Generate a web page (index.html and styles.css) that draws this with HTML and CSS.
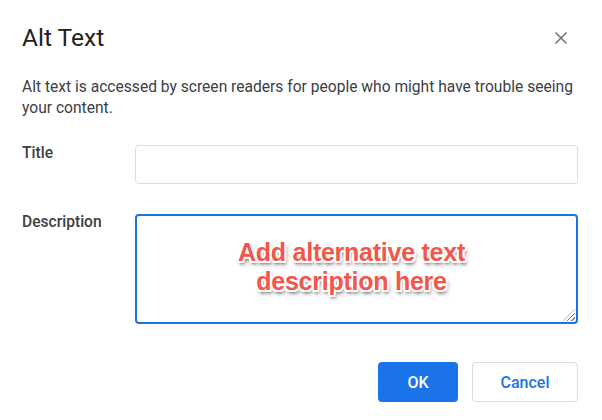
FILE: index.html
```html
<!DOCTYPE html>
<html>
	<head>
		<meta charset="utf-8">
		<title>Alt Text</title>
		<link rel="stylesheet" href="styles.css">
	</head>
	<body>
		<div class="dialog">
			<div class="header">
				<h1>Alt Text</h1>
				<button class="close" aria-label="Close">
					<svg width="12" height="12" viewBox="0 0 12 12">
						<path d="M0.5 0.5 L11.5 11.5 M11.5 0.5 L0.5 11.5" stroke="#6f6f6f" stroke-width="1.5" fill="none"/>
					</svg>
				</button>
			</div>
			<p class="intro">Alt text is accessed by screen readers for people who might have trouble seeing your content.</p>

			<div class="form">
				<label class="label" for="title">Title</label>
				<input class="field" id="title" type="text">

				<label class="label label-desc" for="desc">Description</label>
				<div class="area-wrap">
					<textarea class="area" id="desc"></textarea>
					<span class="grip"></span>
					<!-- annotation over the textarea -->
					<div class="note">Add alternative text<br>description here</div>
				</div>
			</div>

			<div class="actions">
				<button class="btn btn-ok">OK</button>
				<button class="btn btn-cancel">Cancel</button>
			</div>
		</div>
	</body>
</html>
```

FILE: styles.css
```css
* {
	margin: 0;
	padding: 0;
	box-sizing: border-box;
}

body {
	background: #fff;
	font-family: Roboto, "Liberation Sans", sans-serif;
	color: #202124;
}

.dialog {
	width: 602px;
	padding: 22px 24px 0 22px;
}

.header {
	display: flex;
	align-items: center;
	justify-content: space-between;
	height: 32px;
}

.header h1 {
	font-size: 24.5px;
	font-weight: 400;
	line-height: 32px;
	color: #202124;
}

.close {
	width: 24px;
	height: 24px;
	margin-right: 5px;
	border: none;
	background: none;
	display: flex;
	align-items: center;
	justify-content: center;
	cursor: pointer;
}

.intro {
	margin-top: 23px;
	font-size: 15.6px;
	line-height: 21px;
	color: #3c4043;
}

.form {
	display: grid;
	grid-template-columns: 113px 1fr;
	row-gap: 30px;
	margin-top: 26px;
}

.label {
	font-size: 15.6px;
	font-weight: 500;
	line-height: 16px;
	color: #3c4043;
}

.field {
	height: 39px;
	border: 1px solid #dadce0;
	border-radius: 4px;
	outline: none;
	padding: 0 10px;
	font: inherit;
}

.area-wrap {
	position: relative;
	height: 110px;
}

.area {
	display: block;
	width: 100%;
	height: 110px;
	border: 2px solid #1a73e8;
	border-radius: 4px;
	outline: none;
	resize: none;
	padding: 8px 10px;
	font: inherit;
}

/* resize handle drawn in the corner */
.grip {
	position: absolute;
	right: 3px;
	bottom: 3px;
	width: 12px;
	height: 12px;
	background: repeating-linear-gradient(135deg, transparent 0 2px, #7a7a7a 2px 3px);
	clip-path: polygon(100% 0, 100% 100%, 0 100%);
}

.note {
	position: absolute;
	top: 0;
	left: 0;
	right: 0;
	bottom: 0;
	display: flex;
	align-items: center;
	justify-content: center;
	padding: 0 10px 5px 0;
	text-align: center;
	font-family: "Liberation Sans", Arial, sans-serif;
	font-weight: 700;
	font-size: 25px;
	line-height: 29px;
	letter-spacing: -0.25px;
	color: #f4564b;
	pointer-events: none;
	text-shadow:
		2px 0 #fff, -2px 0 #fff, 0 2px #fff, 0 -2px #fff,
		1.5px 1.5px #fff, -1.5px -1.5px #fff, 1.5px -1.5px #fff, -1.5px 1.5px #fff,
		1px 3px 3px rgba(0, 0, 0, 0.5),
		2px 4px 5px rgba(0, 0, 0, 0.3);
}

.actions {
	display: flex;
	justify-content: flex-end;
	gap: 14px;
	margin-top: 38px;
}

.btn {
	height: 40px;
	border-radius: 4px;
	font-family: Roboto, "Liberation Sans", sans-serif;
	font-size: 16px;
	font-weight: 500;
	cursor: pointer;
}

.btn-ok {
	width: 80px;
	border: none;
	background: #1a73e8;
	color: #fff;
}

.btn-cancel {
	width: 106px;
	border: 1px solid #dadce0;
	background: #fff;
	color: #1a73e8;
}
```
